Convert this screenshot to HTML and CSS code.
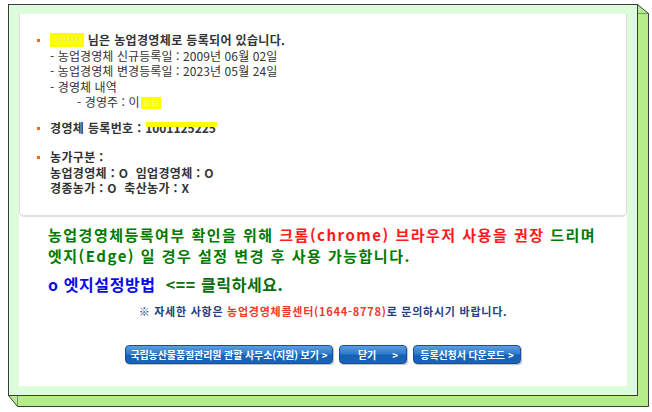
FILE: index.html
```html
<!DOCTYPE html>
<html lang="ko">
<head>
<meta charset="utf-8">
<title>농업경영체 등록 확인</title>
<link rel="stylesheet" href="styles.css">
</head>
<body>
<div class="page">
  <svg class="extrude" width="652" height="412" viewBox="0 0 652 412" aria-hidden="true">
    <polygon points="629.5,0.5 640.5,9.5 640.5,402.5 9.5,402.5 0.5,391.5 629.5,391.5" fill="#b6ed8b" stroke="#3c3c3c" stroke-width="1"/>
    <line x1="629.5" y1="9.5" x2="640.5" y2="9.5" stroke="#3c3c3c" stroke-width="1" stroke-dasharray="1 1"/>
    <line x1="9.5" y1="391.5" x2="9.5" y2="402.5" stroke="#3c3c3c" stroke-width="1" stroke-dasharray="1 1"/>
  </svg>
  <div class="frame">
    <div class="panel">
      <div class="card">
        <ul class="info">
          <li class="item item-owner">
            <span class="dot"></span>
            <div class="body">
              <p class="line strong"><span class="mask mask-name">ㅁㅁㅁ</span> 님은 농업경영체로 등록되어 있습니다.</p>
              <p class="line">- 농업경영체 신규등록일 : 2009년 06월 02일</p>
              <p class="line">- 농업경영체 변경등록일 : 2023년 05월 24일</p>
              <p class="line">- 경영체 내역</p>
              <p class="line sub">- 경영주 : 이 <span class="mask mask-owner">ㅁㅁ</span></p>
            </div>
          </li>
          <li class="item item-number">
            <span class="dot"></span>
            <div class="body">
              <p class="line strong">경영체 등록번호 : <span class="struck">1001125225</span></p>
            </div>
          </li>
          <li class="item">
            <span class="dot"></span>
            <div class="body strong">
              <p class="line">농가구분 :</p>
              <p class="line">농업경영체 : O &nbsp;임업경영체 : O</p>
              <p class="line">경종농가 : O &nbsp;축산농가 : X</p>
            </div>
          </li>
        </ul>
      </div>

      <div class="notice">
        <p class="notice-line">농업경영체등록여부 확인을 위해 <span class="red">크롬(chrome) 브라우저 사용을 권장</span> 드리며</p>
        <p class="notice-line">엣지(Edge) 일 경우 설정 변경 후 사용 가능합니다.</p>
        <p class="notice-link"><span class="blue">o 엣지설정방법</span>&nbsp; &lt;== 클릭하세요.</p>
      </div>

      <p class="note">※ 자세한 사항은 <span class="note-red">농업경영체콜센터(1644-8778)</span>로 문의하시기 바랍니다.</p>

      <div class="buttons">
        <a class="btn btn-office" href="#">국립농산물품질관리원 관할 사무소(지원) 보기 <span class="arrow">&gt;</span></a>
        <a class="btn btn-close" href="#"><span class="btn-label">닫기</span><span class="arrow">&gt;</span></a>
        <a class="btn btn-down" href="#">등록신청서 다운로드 <span class="arrow">&gt;</span></a>
      </div>
    </div>
  </div>
</div>
</body>
</html>
```

FILE: styles.css
```css
* { box-sizing: border-box; }

html, body {
  margin: 0;
  padding: 0;
  background: #ffffff;
}

body {
  font-family: "Noto Sans CJK KR", "Noto Sans", sans-serif;
  color: #333333;
}

p { margin: 0; }

.page {
  position: relative;
  width: 652px;
  height: 412px;
  padding: 4px 0 0 8px;
}

.extrude {
  position: absolute;
  left: 8px;
  top: 4px;
  overflow: visible;
}

.frame {
  position: relative;
  width: 630px;
  height: 392px;
  border: 1px solid #3c3c3c;
  background: #dcfcdc;
  padding: 9px 9px 9px 10px;
}

.panel {
  width: 608px;
  height: 372px;
  background: #ffffff;
  display: flex;
  flex-direction: column;
}

.card {
  height: 203px;
  border: 1px solid #dcdcdc;
  border-top: none;
  border-bottom: 2px solid #e0e0e0;
  border-radius: 0 0 5px 5px;
  padding: 18px 0 0 17px;
}

.info {
  list-style: none;
  margin: 0;
  padding: 0;
}

.item {
  display: flex;
  align-items: flex-start;
}

.item-owner { margin-bottom: 10px; }
.item-number { margin-bottom: 14px; }

.dot {
  width: 3px;
  height: 3px;
  background: #ff6a00;
  margin: 7px 10px 0 0;
  flex: none;
}

.line {
  font-size: 12px;
  line-height: 15.5px;
  letter-spacing: 0.1px;
  white-space: nowrap;
}

.strong { font-weight: 700; }
.strong.line, .strong .line { letter-spacing: 0.35px; }

.sub { padding-left: 27px; }

.mask {
  display: inline-block;
  background: #ffff00;
  color: #e8e8a0;
  font-size: 9px;
  line-height: 13px;
  letter-spacing: 0;
  vertical-align: -2px;
  overflow: hidden;
  text-align: center;
}

.mask-name { width: 34px; height: 14px; }
.mask-owner { width: 20px; height: 12px; margin-left: -2px; color: #f5f5c8; }

.struck {
  position: relative;
  display: inline-block;
  letter-spacing: 0;
}

.struck::after {
  content: "";
  position: absolute;
  left: 1px;
  right: -1px;
  top: 2px;
  height: 5px;
  background: #ffff00;
}

.notice {
  padding: 7px 0 0 29px;
  font-weight: 700;
  color: #007a00;
}

.notice-line {
  font-size: 15px;
  line-height: 21px;
  letter-spacing: 1.5px;
  white-space: nowrap;
}

.red { color: #ff1a1a; }

.notice-link {
  margin-top: 7px;
  font-size: 16px;
  line-height: 22px;
  letter-spacing: 0.6px;
  white-space: nowrap;
  color: #0a6e0a;
}

.blue { color: #0a0ae6; }

.note {
  margin-top: 8px;
  text-align: center;
  font-size: 11px;
  line-height: 16px;
  font-weight: 700;
  letter-spacing: 0.75px;
  color: #24407c;
  white-space: nowrap;
}

.note-red { color: #ee3a2a; }

.buttons {
  margin-top: 26px;
  display: flex;
  justify-content: center;
  gap: 6px;
}

.btn {
  display: flex;
  align-items: center;
  justify-content: center;
  height: 19px;
  border: 1px solid #164f97;
  border-radius: 4px;
  background: linear-gradient(#5c9de0 0%, #2f7ccc 45%, #1461b6 55%, #1a64b4 100%);
  box-shadow: 1px 1px 1px rgba(0, 0, 0, 0.25);
  color: #ffffff;
  font-size: 10px;
  font-weight: 700;
  text-decoration: none;
  white-space: nowrap;
  letter-spacing: -0.1px;
}

.btn-office { width: 208px; }
.btn-close {
  width: 68px;
  justify-content: flex-end;
  padding-right: 8px;
}
.btn-down { width: 108px; }

.arrow { margin-left: 3px; }
.btn-label { margin-right: 13px; }
```
